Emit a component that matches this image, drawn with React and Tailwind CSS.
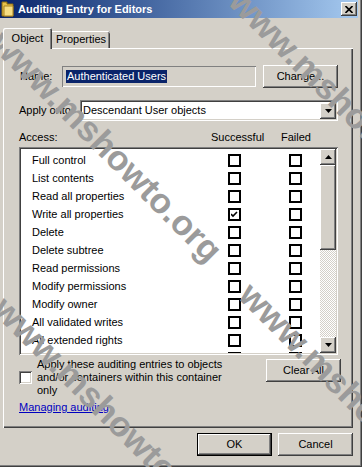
import { useState } from "react";

const raised =
  "shadow-[inset_-1px_-1px_#404040,inset_1px_1px_#ffffff,inset_-2px_-2px_#808080,inset_2px_2px_#d4d0c8]";
const sunken =
  "shadow-[inset_1px_1px_#808080,inset_-1px_-1px_#ffffff,inset_2px_2px_#404040,inset_-2px_-2px_#d4d0c8]";

const rights = [
  { name: "Full control" },
  { name: "List contents" },
  { name: "Read all properties" },
  { name: "Write all properties", ok: true },
  { name: "Delete" },
  { name: "Delete subtree" },
  { name: "Read permissions" },
  { name: "Modify permissions" },
  { name: "Modify owner" },
  { name: "All validated writes" },
  { name: "All extended rights" },
  { name: "Create all child objects" },
];

function FlatCheck({ checked }) {
  return (
    <div className="w-[13px] h-[13px] border-2 border-black bg-white flex items-center justify-center">
      {checked && (
        <svg width="7" height="7" viewBox="0 0 7 7">
          <path d="M0 3 L2 5 L6 1" fill="none" stroke="#000" strokeWidth="1.6" />
        </svg>
      )}
    </div>
  );
}

function Button({ children, isDefault }) {
  return (
    <div
      className={`w-[75px] h-[23px] flex items-center justify-center bg-[#d4d0c8] ${
        isDefault
          ? "shadow-[inset_0_0_0_1px_#000000,inset_-2px_-2px_#404040,inset_2px_2px_#ffffff,inset_-3px_-3px_#808080]"
          : raised
      }`}
    >
      {children}
    </div>
  );
}

function Arrow({ up }) {
  return (
    <div className={`w-[16px] h-[16px] shrink-0 bg-[#d4d0c8] flex items-center justify-center ${raised}`}>
      <svg width="7" height="4" viewBox="0 0 7 4">
        <path d={up ? "M3.5 0 L7 4 L0 4 Z" : "M0 0 L7 0 L3.5 4 Z"} fill="#000" />
      </svg>
    </div>
  );
}

export default function App() {
  const [rows] = useState(rights);

  return (
    <div className="relative w-[362px] h-[467px] overflow-hidden bg-[#d4d0c8] text-[11px] text-black font-['Liberation_Sans',Arial,sans-serif] shadow-[inset_-1px_-1px_#404040,inset_-2px_-2px_#808080]">
      {/* Title bar */}
      <div className="w-[358px] h-[18px] flex items-center bg-gradient-to-r from-[#0a246a] to-[#a6caf0]">
        <svg width="13" height="16" viewBox="0 0 13 16" className="ml-[1px]">
          <path d="M1 1 L6 1 L6 3 L12 3 L12 15 L1 15 Z" fill="#e8c14a" stroke="#8a6a10" />
          <path d="M3 5 L12 5 L12 15 L3 15 Z" fill="#f7de84" stroke="#a88220" />
        </svg>
        <span className="ml-[4px] font-bold text-white">Auditing Entry for Editors</span>
        <div className={`ml-auto mr-[1px] w-[16px] h-[14px] bg-[#d4d0c8] flex items-center justify-center ${raised}`}>
          <svg width="8" height="7" viewBox="0 0 8 7">
            <path d="M0.5 0 L7.5 7 M7.5 0 L0.5 7" stroke="#000" strokeWidth="1.6" />
          </svg>
        </div>
      </div>

      {/* Tabs */}
      <div className="flex items-end pl-[3px] mt-[10px]">
        <div className="relative z-10 -mb-px w-[49px] h-[21px] bg-[#d4d0c8] rounded-tl-[2px] rounded-tr-[2px] shadow-[inset_1px_1px_#ffffff,inset_-1px_0_#404040,inset_-2px_0_#808080] flex items-center justify-center">
          Object
        </div>
        <div className="w-[58px] h-[17px] bg-[#d4d0c8] rounded-tr-[2px] shadow-[inset_0_1px_#ffffff,inset_-1px_0_#404040,inset_-2px_0_#808080] flex items-center justify-center">
          Properties
        </div>
      </div>

      {/* Panel */}
      <div className="ml-[3px] w-[350px] h-[380px] shadow-[inset_1px_1px_#ffffff,inset_-1px_-1px_#404040,inset_-2px_-2px_#808080] flex flex-col">
        <div className="mt-[17px] h-[23px] pl-[17px] flex items-center">
          <span className="w-[42px]">Name:</span>
          <div className="w-[194px] h-[21px] flex items-center pl-[4px] shadow-[inset_1px_1px_#808080,inset_-1px_-1px_#ffffff]">
            <span className="bg-[#0a246a] text-white px-px leading-[13px]">Authenticated Users</span>
          </div>
          <div className="ml-[7px]">
            <Button>Change...</Button>
          </div>
        </div>

        <div className="mt-[12px] h-[21px] pl-[16px] flex items-center">
          <span className="w-[61px]">Apply onto:</span>
          <div className={`w-[258px] h-[21px] bg-white flex items-center pl-[3px] pr-[2px] ${sunken}`}>
            <span className="flex-1">Descendant User objects</span>
            <Arrow />
          </div>
        </div>

        <div className="mt-[9px] h-[14px] pl-[16px] flex items-center">
          <span className="w-[192px]">Access:</span>
          <span className="w-[70px]">Successful</span>
          <span>Failed</span>
        </div>

        <div className={`mt-[3px] ml-[16px] w-[319px] h-[208px] bg-white p-[2px] flex ${sunken}`}>
          <div className="flex-1 overflow-hidden pt-[2px]">
            {rows.map((r) => (
              <div key={r.name} className="h-[18px] pl-[11px] flex items-center">
                <span className="w-[196px]">{r.name}</span>
                <FlatCheck checked={r.ok} />
                <div className="ml-[48px]">
                  <FlatCheck />
                </div>
              </div>
            ))}
          </div>
          <div className="w-[16px] flex flex-col">
            <Arrow up />
            <div className={`h-[85px] bg-[#d4d0c8] ${raised}`} />
            <div className="flex-1 bg-[repeating-conic-gradient(#ffffff_0%_25%,#d4d0c8_0%_50%)] bg-[length:2px_2px]" />
            <Arrow />
          </div>
        </div>

        <div className="mt-[3px] pl-[16px] flex items-start">
          <div className="w-[244px] flex items-center">
            <div className={`w-[13px] h-[13px] bg-white shrink-0 ${sunken}`} />
            <div className="ml-[5px] leading-[13px]">
              Apply these auditing entries to objects
              <br />
              and/or containers within this container
              <br />
              only
            </div>
          </div>
          <div className="ml-[3px] mt-[1px]">
            <Button>Clear All</Button>
          </div>
        </div>

        <div className="mt-[4px] pl-[16px] leading-[13px]">
          <span className="text-[#0000c0] underline">Managing auditing</span>
        </div>
      </div>

      {/* Buttons */}
      <div className="mt-[5px] flex justify-end gap-[6px] w-[353px]">
        <Button isDefault>OK</Button>
        <Button>Cancel</Button>
      </div>

      {/* Watermark */}
      <div className="pointer-events-none absolute left-[10px] top-[24px] origin-top-left rotate-45 whitespace-nowrap text-[35px] leading-none font-bold text-[#9b9b9b]">
        www.mshowto.org
      </div>
      <div className="pointer-events-none absolute left-[258px] top-[276px] origin-top-left rotate-45 whitespace-nowrap text-[35px] leading-none font-bold text-[#9b9b9b]">
        www.mshowto.org
      </div>
      <div className="pointer-events-none absolute left-[248px] top-[-18px] origin-top-left rotate-45 whitespace-nowrap text-[35px] leading-none font-bold text-[#9b9b9b]">
        www.mshowto.org
      </div>
      <div className="pointer-events-none absolute left-[12px] top-[290px] origin-top-left rotate-45 whitespace-nowrap text-[35px] leading-none font-bold text-[#9b9b9b]">
        www.mshowto.org
      </div>
    </div>
  );
}
